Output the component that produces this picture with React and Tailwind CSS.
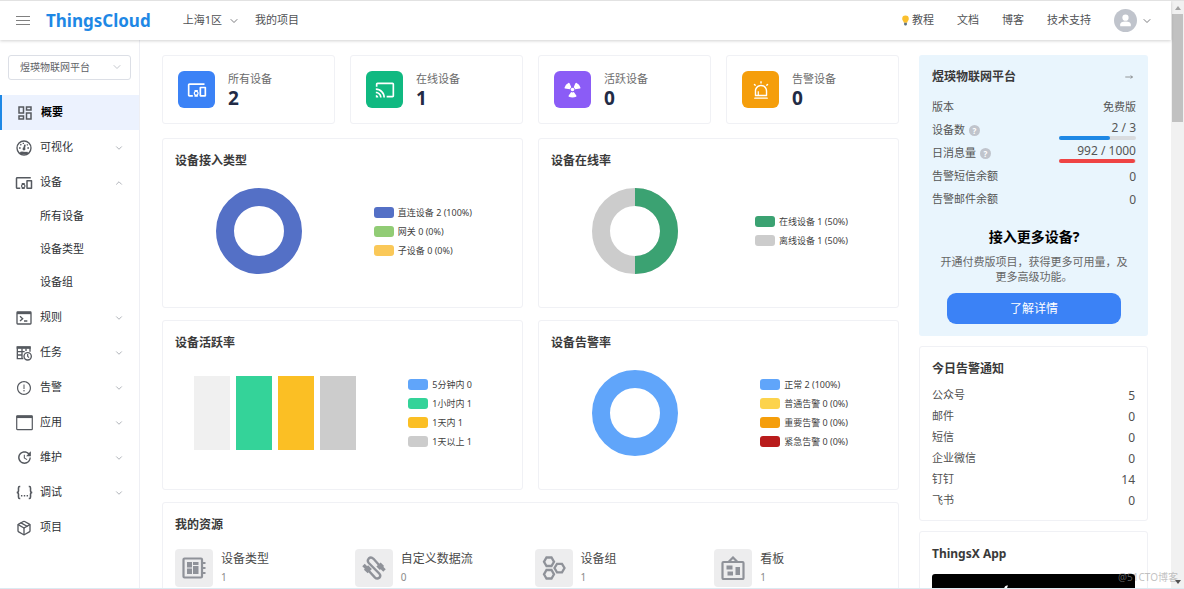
import { ChevronDown, ChevronUp, MoveRight, Package } from 'lucide-react';
import { MdCast, MdDevicesOther, MdOutlineDashboard, MdUpdate } from 'react-icons/md';
import { AiOutlineAlert, AiOutlineExclamationCircle } from 'react-icons/ai';
import { FaApple } from 'react-icons/fa';

/* ---------- icons ---------- */

function GaugeIcon() {
  return (
    <svg viewBox="0 0 24 24" className="size-4" fill="none" stroke="currentColor" strokeWidth="2">
      <circle cx="12" cy="12" r="10.500" />
      <path d="M5 19.500c2-2.500 4.500-2 7-1.500s5-1 7 1.500v1.500H5z" fill="currentColor" strokeWidth="0.500" />
      <path d="M12 13.500l1.500-6.500" strokeWidth="2.500" />
      <circle cx="12" cy="13.500" r="1.200" />
      <path d="M4.500 12H7M17 12h2.500M6.500 6.500L8 8M17.500 6.500L16.500 8M11 4v2" />
    </svg>
  );
}

function TerminalIcon() {
  return (
    <svg viewBox="0 0 24 24" className="size-4" fill="none" stroke="currentColor" strokeWidth="2">
      <rect x="1.500" y="3" width="21" height="18" rx="1" />
      <path d="M1.500 4.500h21" strokeWidth="3.500" />
      <path d="M6 9.500l4 3.500-4 3.500M12 16.500h5" />
    </svg>
  );
}

function TaskIcon() {
  return (
    <svg viewBox="0 0 24 24" className="size-4" fill="none" stroke="currentColor" strokeWidth="2">
      <path d="M11 20.500H2V3h19v7M2 10h11M2 15h8M9 5v15.500M15 5v4" />
      <path d="M1 4h21" strokeWidth="3.500" />
      <circle cx="17.500" cy="17" r="5.500" />
      <path d="M17.500 13.500V17l2 2" strokeWidth="1.800" />
    </svg>
  );
}

function WindowIcon() {
  return (
    <svg viewBox="0 0 24 24" className="size-[17px]" fill="none" stroke="currentColor" strokeWidth="1.700">
      <rect x="1" y="2.500" width="22" height="19.500" rx="1" />
      <path d="M1 4h22" strokeWidth="3.500" />
    </svg>
  );
}

function BracesIcon() {
  return (
    <svg viewBox="0 0 24 24" className="size-[17px]" fill="none" stroke="currentColor" strokeWidth="2.200">
      <path d="M6 3.500H5Q3.500 3.500 3.500 5.500V9.500Q3.500 12 1 12Q3.500 12 3.500 14.500V18.500Q3.500 20.500 5 20.500H6" />
      <path d="M18 3.500H19Q20.500 3.500 20.500 5.500V9.500Q20.500 12 23 12Q20.500 12 20.500 14.500V18.500Q20.500 20.500 19 20.500H18" />
      <path d="M7 16.500h2M11 16.500h2M15 16.500h2" />
    </svg>
  );
}

function RadiationIcon() {
  return (
    <svg viewBox="0 0 24 24" className="size-[19px]" fill="currentColor">
      <circle cx="12" cy="12" r="2.300" />
      <path d="M8.700 11.800L2.500 10.700Q1.700 10.500 2 9.500Q3.200 5.300 6.800 3.700Q7.700 3.300 8.300 4.200L10.500 9Q9.200 10 8.700 11.800z" />
      <path d="M15.300 11.800l6.200-1.100q.8-.2.500-1.200q-1.200-4.200-4.800-5.800q-.9-.4-1.500.5L13.500 9q1.300 1 1.800 2.800z" />
      <path d="M10.300 15.300q1.700.8 3.400 0l3.100 4.300q.6.900-.3 1.400q-4.500 2-9 0q-.9-.5-.3-1.400z" />
    </svg>
  );
}

function BoardChipIcon() {
  return (
    <svg viewBox="0 0 24 24" className="size-6" fill="currentColor">
      <rect x="1.500" y="2.500" width="18.500" height="19" rx="1" fill="none" stroke="currentColor" strokeWidth="2.200" />
      <path d="M5 6h5v5.500H5zM5 12.500h5V18H5zM11 6h5.500v3H11zM11 10h5.500v8H11z" />
      <path d="M20 6h3.500v2H20zM20 11h3.500v2H20zM20 16h3.500v2H20z" />
    </svg>
  );
}

function CableIcon() {
  return (
    <svg viewBox="0 0 24 24" className="size-6" fill="none" stroke="currentColor">
      <path
        d="M17.500 9.500L11.500 2.800Q9 .5 6.800 2.500Q4.800 4.800 6.800 7L17.200 17.500Q19.300 19.800 17.300 21.800Q15 23.500 12.800 21.300L6 14"
        strokeWidth="2.400"
      />
      <path d="M16.500 8.500l3.500 3.500M7.800 15.200L4 11.500" strokeWidth="6" />
      <path d="M19.500 11.500l3 3M4.500 12L1.500 9" strokeWidth="3.500" />
    </svg>
  );
}

function HexGroupIcon() {
  return (
    <svg viewBox="0 0 24 24" className="size-6" fill="none" stroke="currentColor" strokeWidth="2.300">
      <path d="M4.500 1.500h5L12 5.800 9.500 10h-5L2 5.800z" />
      <path d="M4.500 14h5l2.500 4.300-2.500 4.200h-5L2 18.300z" />
      <path d="M15 7.800h5l2.500 4.200-2.500 4.300h-5L12.500 12z" />
    </svg>
  );
}

function KanbanIcon() {
  return (
    <svg viewBox="0 0 24 24" className="size-6" fill="none" stroke="currentColor" strokeWidth="2.200">
      <rect x="1.500" y="6" width="21" height="17" rx="1" />
      <path d="M7.500 6L12 1.500 16.500 6" />
      <path d="M5.500 9.500h6v4h-6zM6.500 15.500h5.500v4H6.500zM14.500 11h4.500v8h-4.500z" fill="currentColor" stroke="none" />
    </svg>
  );
}

function BulbIcon() {
  return (
    <svg viewBox="0 0 16 20" className="h-[11px] w-[9px]">
      <path d="M8 1a6 6 0 0 0-6 6.200c0 2.600 2.500 4 3 6.800h6c.5-2.800 3-4.200 3-6.800A6 6 0 0 0 8 1z" fill="#fbc02d" />
      <path d="M5.500 14h5v3.500L9 19H7l-1.500-1.500z" fill="#5f7380" />
    </svg>
  );
}

/* ---------- data ---------- */

const MENU = [
  { name: '概要', icon: <MdOutlineDashboard className="size-[18px]" />, active: true },
  { name: '可视化', icon: <GaugeIcon />, expandable: true },
  {
    name: '设备',
    icon: <MdDevicesOther className="size-[18px]" />,
    expandable: true,
    children: ['所有设备', '设备类型', '设备组'],
  },
  { name: '规则', icon: <TerminalIcon />, expandable: true },
  { name: '任务', icon: <TaskIcon />, expandable: true },
  { name: '告警', icon: <AiOutlineExclamationCircle className="size-4" />, expandable: true },
  { name: '应用', icon: <WindowIcon />, expandable: true },
  { name: '维护', icon: <MdUpdate className="size-[17px]" />, expandable: true },
  { name: '调试', icon: <BracesIcon />, expandable: true },
  { name: '项目', icon: <Package className="size-4" /> },
];

const STATS = [
  { label: '所有设备', value: 2, color: 'bg-[#3b82f6]', icon: <MdDevicesOther className="size-5" /> },
  { label: '在线设备', value: 1, color: 'bg-[#10b981]', icon: <MdCast className="size-5" /> },
  { label: '活跃设备', value: 0, color: 'bg-[#8b5cf6]', icon: <RadiationIcon /> },
  { label: '告警设备', value: 0, color: 'bg-[#f59e0b]', icon: <AiOutlineAlert className="size-5" /> },
];

const ACCESS_LEGEND = [
  { label: '直连设备 2 (100%)', color: 'bg-[#5470c6]' },
  { label: '网关 0 (0%)', color: 'bg-[#91cc75]' },
  { label: '子设备 0 (0%)', color: 'bg-[#fac858]' },
];

const ONLINE_LEGEND = [
  { label: '在线设备 1 (50%)', color: 'bg-[#3ba272]' },
  { label: '离线设备 1 (50%)', color: 'bg-[#cccccc]' },
];

const ACTIVE_LEGEND = [
  { label: '5分钟内 0', color: 'bg-[#60a5fa]' },
  { label: '1小时内 1', color: 'bg-[#34d399]' },
  { label: '1天内 1', color: 'bg-[#fbbf24]' },
  { label: '1天以上 1', color: 'bg-[#cccccc]' },
];

const ALARM_LEGEND = [
  { label: '正常 2 (100%)', color: 'bg-[#60a5fa]' },
  { label: '普通告警 0 (0%)', color: 'bg-[#fcd34d]' },
  { label: '重要告警 0 (0%)', color: 'bg-[#f59e0b]' },
  { label: '紧急告警 0 (0%)', color: 'bg-[#b91c1c]' },
];

const RESOURCES = [
  { name: '设备类型', count: 1, icon: <BoardChipIcon /> },
  { name: '自定义数据流', count: 0, icon: <CableIcon /> },
  { name: '设备组', count: 1, icon: <HexGroupIcon /> },
  { name: '看板', count: 1, icon: <KanbanIcon /> },
];

const NOTICES = [
  ['公众号', 5],
  ['邮件', 0],
  ['短信', 0],
  ['企业微信', 0],
  ['钉钉', 14],
  ['飞书', 0],
];

/* ---------- pieces ---------- */

function Header() {
  return (
    <header className="relative z-10 flex h-[39px] shrink-0 items-center bg-white pl-4 pr-[18px] text-[11px] text-[#505255] shadow-[0_1px_3px_rgba(0,0,0,0.18)]">
      <button type="button" aria-label="菜单" className="flex w-[14px] flex-col gap-[3px]">
        <span className="h-px w-full bg-[#808080]" />
        <span className="h-px w-full bg-[#808080]" />
        <span className="h-px w-full bg-[#808080]" />
      </button>
      <a href="#" className="ml-4 text-[17px] font-bold leading-6 text-[#1e88e5]">ThingsCloud</a>
      <button type="button" className="ml-8 flex items-center gap-1.5">
        上海1区
        <ChevronDown className="size-3" strokeWidth={1.5} />
      </button>
      <a href="#" className="ml-[15px]">我的项目</a>

      <nav className="ml-auto flex items-center gap-[23px]">
        <a href="#" className="flex items-center gap-0.5"><BulbIcon />教程</a>
        <a href="#">文档</a>
        <a href="#">博客</a>
        <a href="#">技术支持</a>
        <button type="button" aria-label="用户" className="flex items-center gap-1">
          <span className="flex size-[23px] items-center justify-center rounded-full bg-[#c0c4cc]">
            <svg viewBox="0 0 24 24" className="size-[15px]" fill="#fff">
              <circle cx="12" cy="7.500" r="5" />
              <path d="M3.500 21v-2.500c0-3 3-5 8.500-5s8.500 2 8.500 5V21z" />
            </svg>
          </span>
          <ChevronDown className="size-3" strokeWidth={1.5} />
        </button>
      </nav>
    </header>
  );
}

function MenuItem({ item }) {
  const Arrow = item.children ? ChevronUp : ChevronDown;
  return (
    <li>
      {item.expandable ? (
        <button type="button" className="flex h-[35px] w-full items-center pl-[15px] pr-[15px]">
          <span className="flex w-[18px] justify-center text-[#55595f]">{item.icon}</span>
          <span className="ml-[7px]">{item.name}</span>
          <Arrow className="ml-auto size-2.5 text-[#a0a4ab]" strokeWidth={2} />
        </button>
      ) : (
        <a
          href="#"
          className={
            item.active
              ? 'flex h-[35px] items-center border-l-2 border-[#1e88e5] bg-[#ecf2fe] pl-[14px] font-bold text-black'
              : 'flex h-[35px] items-center pl-[15px]'
          }
        >
          <span className="flex w-[18px] justify-center text-[#55595f]">{item.icon}</span>
          <span className="ml-[7px]">{item.name}</span>
        </a>
      )}
      {item.children && (
        <ul className="pb-px">
          {item.children.map((name) => (
            <li key={name}>
              <a href="#" className="flex h-[33px] items-center pl-10">{name}</a>
            </li>
          ))}
        </ul>
      )}
    </li>
  );
}

function Sidebar() {
  return (
    <aside className="w-[140px] shrink-0 border-r border-[#eeeff4] pt-[15px] text-[11px] text-[#2d3135]">
      <div className="relative mx-2 mb-[15px]">
        <select
          aria-label="项目"
          className="block h-[25px] w-full appearance-none rounded-[3px] border border-[#dcdfe6] bg-white pl-[11px] text-[10px] text-[#606266]"
        >
          <option>煜瑛物联网平台</option>
        </select>
        <ChevronDown className="pointer-events-none absolute right-2 top-1.5 size-3 text-[#b0b4bc]" strokeWidth={1.5} />
      </div>
      <ul>
        {MENU.map((item) => <MenuItem key={item.name} item={item} />)}
      </ul>
    </aside>
  );
}

function StatCard({ stat }) {
  return (
    <div className="flex h-[69px] items-center rounded-[3px] border border-[#f0f1f5] bg-white pl-[15px]">
      <span className={`flex size-[37px] items-center justify-center rounded-[6px] text-white ${stat.color}`}>
        {stat.icon}
      </span>
      <div className="ml-[13px]">
        <p className="text-[11px] leading-4 text-[#6b6b6b]">{stat.label}</p>
        <p className="text-[19px] font-bold leading-[22px] text-[#222b45]">{stat.value}</p>
      </div>
    </div>
  );
}

function Legend({ items }) {
  return (
    <ul className="ml-auto mr-[38px]">
      {items.map(({ label, color }) => (
        <li key={label} className="flex h-[19px] items-center gap-1 text-[9px] leading-[19px] text-[#3f3f3f]">
          <span className={`h-[11px] w-5 rounded-[3px] ${color}`} />
          {label}
        </li>
      ))}
    </ul>
  );
}

function Donut({ color, half }) {
  return (
    <svg viewBox="0 0 86 86" className="ml-[41px] size-[86px]" fill="none" strokeWidth="18">
      <circle cx="43" cy="43" r="34" stroke={color} />
      {half && <path d="M43 9a34 34 0 0 1 0 68" stroke={half} />}
    </svg>
  );
}

function ChartCard({ title, legend, children }) {
  return (
    <section className="rounded-[3px] border border-[#f0f1f5] bg-white px-3 pb-[33px] pt-[14px]">
      <h2 className="text-[12px] font-bold leading-4 text-[#3a3a3a]">{title}</h2>
      <div className="mt-[19px] flex h-[86px] items-center">
        {children}
        <Legend items={legend} />
      </div>
    </section>
  );
}

function Resources() {
  return (
    <section className="rounded-[3px] border border-[#f0f1f5] bg-white pb-4 pl-3 pr-1 pt-[14px]">
      <h2 className="text-[12px] font-bold leading-4 text-[#3a3a3a]">我的资源</h2>
      <div className="mt-4 grid grid-cols-4">
        {RESOURCES.map(({ name, count, icon }) => (
          <a key={name} href="#" className="flex gap-2">
            <span className="flex size-[38px] items-center justify-center rounded-[4px] bg-[#ededee] text-[#8f9299]">
              {icon}
            </span>
            <span className="flex flex-col text-[#4a4a4a]">
              <span className="text-[12px] leading-5">{name}</span>
              <span className="text-[10px] leading-4 text-[#8a8a8a]">{count}</span>
            </span>
          </a>
        ))}
      </div>
    </section>
  );
}

function Help() {
  return (
    <span className="flex size-[11px] items-center justify-center rounded-full bg-[#c0c4cc] text-[8px] font-bold leading-none text-white">?</span>
  );
}

function Usage({ text, percent, color }) {
  return (
    <div className="w-[77px] pb-0.5 text-right">
      <p className="text-[12px] leading-[17px]">{text}</p>
      <div className="h-1 rounded-full bg-[#d9dcdf]">
        <div className={`h-full rounded-full ${color}`} style={{ width: `${percent}%` }} />
      </div>
    </div>
  );
}

function PlanCard() {
  return (
    <section className="rounded-[3px] bg-[#e9f5fd] pb-3 pl-[13px] pr-3 pt-[14px] text-[11px] text-[#555]">
      <div className="flex items-center justify-between">
        <h2 className="text-[12px] font-bold leading-4 text-[#3a3a3a]">煜瑛物联网平台</h2>
        <a href="#" aria-label="详情" className="mr-[3px]"><MoveRight className="size-2 text-[#666]" /></a>
      </div>
      <dl className="mt-[11px]">
        <div className="flex h-[23px] items-center justify-between">
          <dt>版本</dt>
          <dd>免费版</dd>
        </div>
        <div className="flex h-[23px] items-center justify-between">
          <dt className="flex items-center gap-1">设备数 <Help /></dt>
          <dd><Usage text="2 / 3" percent={66.7} color="bg-[#1e88e5]" /></dd>
        </div>
        <div className="flex h-[23px] items-center justify-between">
          <dt className="flex items-center gap-1">日消息量 <Help /></dt>
          <dd><Usage text="992 / 1000" percent={99.2} color="bg-[#ef4444]" /></dd>
        </div>
        <div className="flex h-[23px] items-center justify-between">
          <dt>告警短信余额</dt>
          <dd className="text-[12px]">0</dd>
        </div>
        <div className="flex h-[23px] items-center justify-between">
          <dt>告警邮件余额</dt>
          <dd className="text-[12px]">0</dd>
        </div>
      </dl>
      <div className="mt-4 px-2 text-center">
        <h3 className="text-[14px] font-bold leading-5 text-black">接入更多设备?</h3>
        <p className="mt-[7px] leading-[15px] text-[#666]">开通付费版项目，获得更多可用量，及更多高级功能。</p>
      </div>
      <button type="button" className="mx-auto mt-[9px] block h-[31px] w-[174px] rounded-[9px] bg-[#3b82f6] text-[12px] text-white">
        了解详情
      </button>
    </section>
  );
}

function NoticeCard() {
  return (
    <section className="rounded-[3px] border border-[#f0f1f5] bg-white px-3 pb-[9px] pt-[14px]">
      <h2 className="text-[12px] font-bold leading-4 text-[#3a3a3a]">今日告警通知</h2>
      <dl className="mt-2 text-[11px] text-[#505050]">
        {NOTICES.map(([name, count]) => (
          <div key={name} className="flex h-[21px] items-center justify-between">
            <dt>{name}</dt>
            <dd className="text-[12px]">{count}</dd>
          </div>
        ))}
      </dl>
    </section>
  );
}

function AppCard() {
  return (
    <section className="rounded-[3px] border border-[#f0f1f5] bg-white px-3 pb-4 pt-[14px]">
      <h2 className="text-[12px] font-bold leading-4 text-[#3a3a3a]">ThingsX App</h2>
      <a href="#" className="mt-3 flex h-10 items-center justify-center gap-1 rounded-[3px] bg-black text-[12px] text-white">
        <FaApple className="size-5" />
        App Store
      </a>
    </section>
  );
}

function Scrollbar() {
  return (
    <div aria-hidden="true" className="flex w-[13px] shrink-0 flex-col items-center bg-[#f1f1f1] pb-1 pt-[5px]">
      <span className="border-x-[3px] border-b-[4px] border-x-transparent border-b-[#a3a3a3]" />
      <span className="mt-1 h-[108px] w-[11px] bg-[#c1c1c1]" />
      <span className="mt-auto border-x-[3px] border-t-[4px] border-x-transparent border-t-[#505050]" />
    </div>
  );
}

export default function App() {
  return (
    <div className="relative flex h-screen overflow-hidden border-b border-t border-b-[#dceaf2] border-t-[#e2e2e2] bg-white font-['Noto_Sans','Noto_Sans_CJK_SC',sans-serif]">
      <div className="flex min-w-0 flex-1 flex-col">
        <Header />
        <div className="flex min-h-0 flex-1">
          <Sidebar />
          <main className="flex min-w-0 flex-1 items-start gap-5 overflow-hidden pl-[22px] pr-[23px] pt-[15px]">

            {/* main column */}
            <div className="min-w-0 flex-1">
              <div className="mb-3.5 grid grid-cols-4 gap-[15px]">
                {STATS.map((stat) => <StatCard key={stat.label} stat={stat} />)}
              </div>
              <div className="mb-3 grid grid-cols-2 gap-x-[15px] gap-y-3">
                <ChartCard title="设备接入类型" legend={ACCESS_LEGEND}>
                  <Donut color="#5470c6" />
                </ChartCard>
                <ChartCard title="设备在线率" legend={ONLINE_LEGEND}>
                  <Donut color="#cccccc" half="#3ba272" />
                </ChartCard>
                <ChartCard title="设备活跃率" legend={ACTIVE_LEGEND}>
                  <div className="ml-[19px] flex h-[74px] gap-1.5">
                    <span className="w-9 bg-[#f0f0f0]" />
                    <span className="w-9 bg-[#34d399]" />
                    <span className="w-9 bg-[#fbbf24]" />
                    <span className="w-9 bg-[#cccccc]" />
                  </div>
                </ChartCard>
                <ChartCard title="设备告警率" legend={ALARM_LEGEND}>
                  <Donut color="#60a5fa" />
                </ChartCard>
              </div>
              <Resources />
            </div>

            {/* right column */}
            <div className="flex w-[229px] shrink-0 flex-col gap-2.5">
              <PlanCard />
              <NoticeCard />
              <AppCard />
            </div>

          </main>
        </div>
      </div>
      <Scrollbar />
      <span className="absolute bottom-1 right-1.5 text-[10px] leading-[14px] text-[#999]/60">@51CTO博客</span>
    </div>
  );
}
